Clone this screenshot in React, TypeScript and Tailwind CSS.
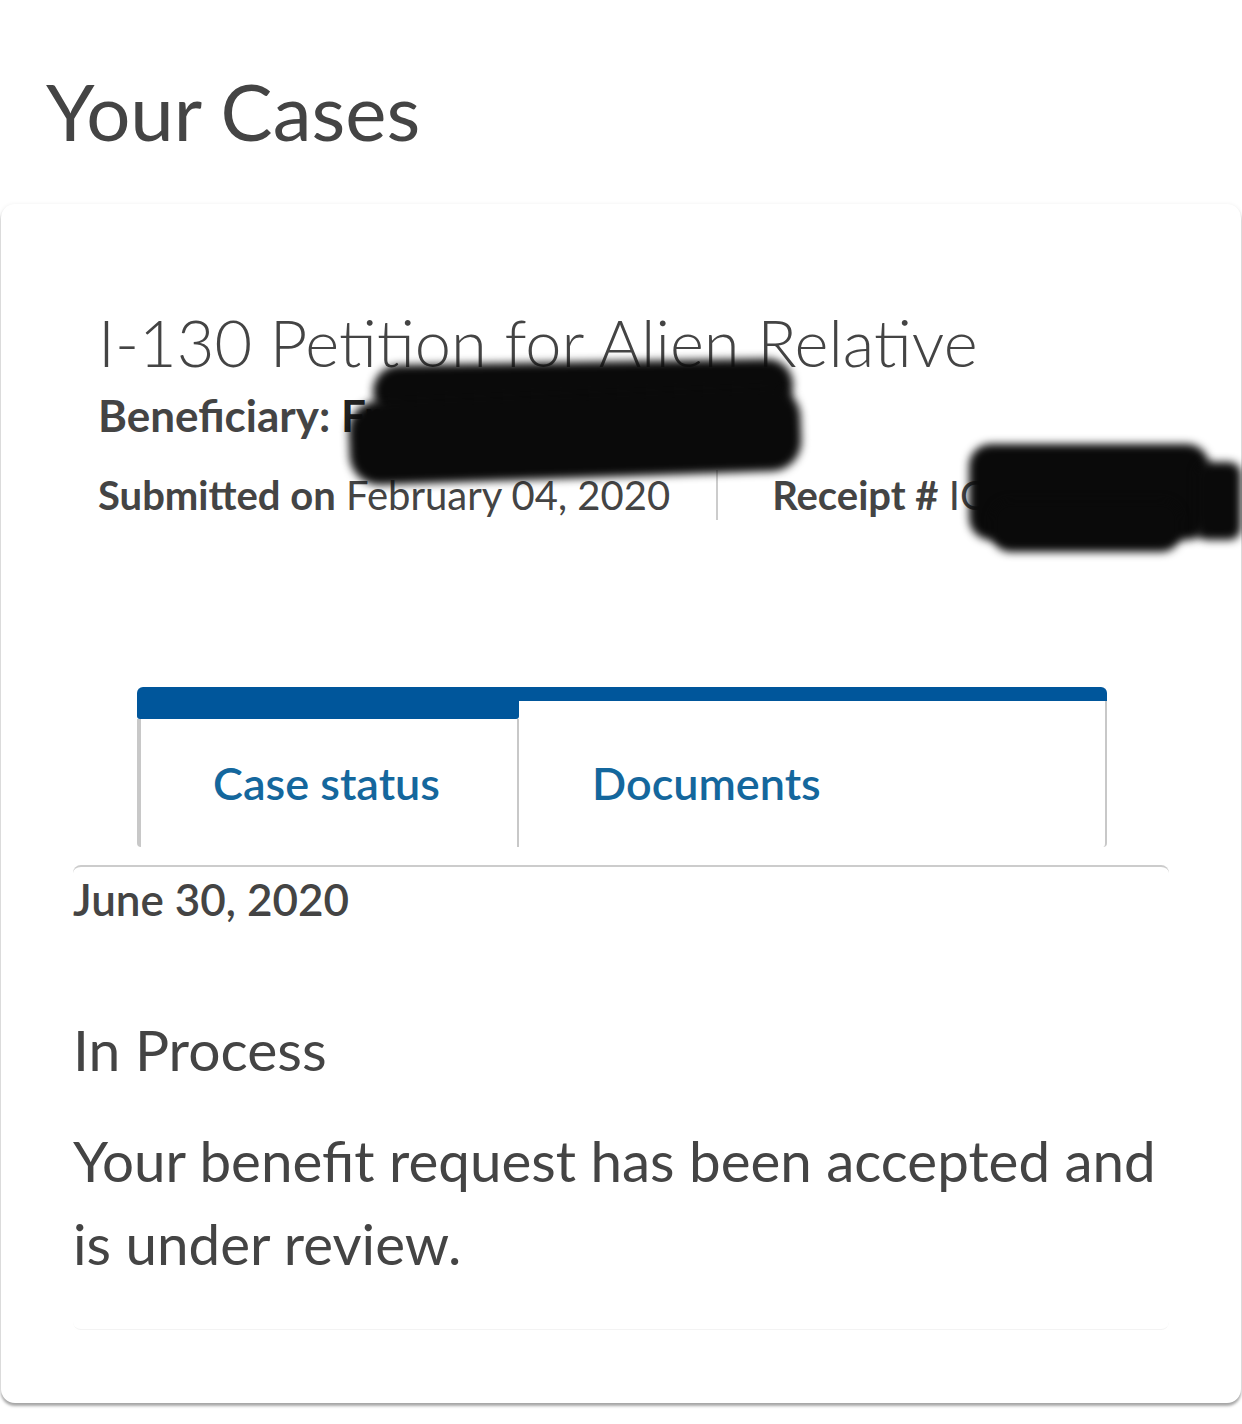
import React from "react";

function Redaction({ className }: { className: string }) {
  return <div className={"pointer-events-none absolute bg-[#0a0a0a] blur-[4px] " + className} />;
}

export default function App() {
  return (
    <div className="min-h-[1424px] bg-white font-[Lato,sans-serif] text-[#444444]">
      <h1 className="pl-[46px] pt-[72px] text-[78px] font-normal leading-[78px]">Your Cases</h1>

      <div className="relative mx-[1px] mt-[54px] rounded-[14px] bg-white pb-[73px] pt-[105px] shadow-[0_3px_3px_rgba(0,0,0,0.34),0_0_4px_rgba(0,0,0,0.06)]">
        <div className="pl-[97px]">
          <h2 className="text-[65px] font-light leading-[66px]">I-130 Petition for Alien Relative</h2>
          <div className="mt-[18px] whitespace-nowrap text-[44px] font-bold leading-[44px]">
            Beneficiary: <span className="text-[#222]">Fr</span>
          </div>
          <div className="mt-[33px] flex h-[50px] items-center whitespace-nowrap text-[40px] leading-[40px]">
            <div className="pr-[46px]">
              <span className="font-bold">Submitted on</span> February 04, 2020
            </div>
            <div className="h-[50px] w-[2px] bg-[#cccccc]" />
            <div className="pl-[54px]">
              <span className="font-bold">Receipt #</span> IO
            </div>
          </div>
        </div>

        <div className="ml-[136px] mt-[167px] w-[970px]">
          <div className="h-[14px] rounded-t-[6px] bg-[#00569b]" />
          <div className="flex h-[146px]">
            <div className="flex w-[382px] flex-col">
              <div className="h-[18px] rounded-b-[3px] bg-[#00569b]" />
              <div className="flex flex-1 items-center rounded-bl-[4px] border-l-[4px] border-r-[2px] border-[#c8c8c8] pl-[72px]">
                <span className="text-[45px] font-semibold leading-[45px] text-[#14679d]">Case status</span>
              </div>
            </div>
            <div className="flex flex-1 items-center rounded-br-[4px] border-r-[2px] border-[#c8c8c8] pl-[73px] pt-[18px]">
              <span className="text-[45px] font-semibold leading-[45px] text-[#14679d]">Documents</span>
            </div>
          </div>
        </div>

        <div className="mx-[72px] mt-[18px] rounded-t-[8px] rounded-b-[8px] border-t-2 border-b border-t-[#cccccc] border-b-[#f3f3f3] pb-[44px] pt-[10px]">
          <div className="text-[44px] font-semibold leading-[44px]">June 30, 2020</div>
          <div className="mt-[100px] text-[57px] font-normal leading-[57px]">In Process</div>
          <p className="mt-[41px] text-[56.5px] leading-[83px]">
            Your benefit request has been accepted and
            <br />
            is under review.
          </p>
        </div>

        <Redaction className="left-[372px] top-[158px] h-[52px] w-[420px] rounded-[28px] -rotate-1" />
        <Redaction className="left-[348px] top-[190px] h-[84px] w-[452px] rounded-[30px] rotate-[-2deg]" />
        <Redaction className="left-[968px] top-[240px] h-[96px] w-[240px] rounded-[22px]" />
        <Redaction className="left-[1195px] top-[258px] h-[78px] w-[45px] rounded-[12px]" />
        <Redaction className="left-[990px] top-[296px] h-[52px] w-[190px] rounded-[20px]" />
      </div>
    </div>
  );
}
